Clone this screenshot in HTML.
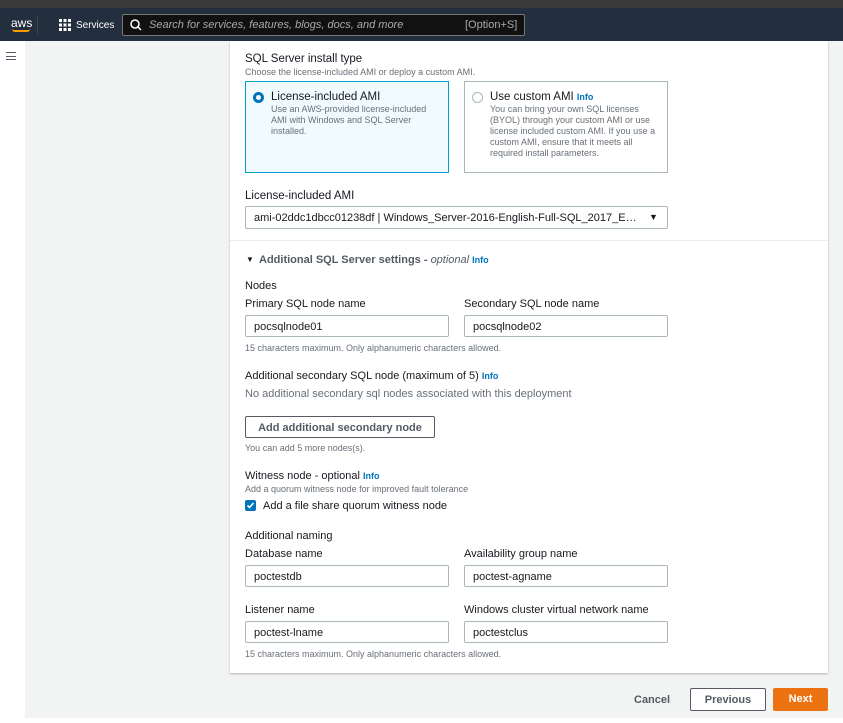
<!DOCTYPE html>
<html><head><meta charset="utf-8"><style>
*{box-sizing:border-box;margin:0;padding:0}
body{width:843px;height:723px;overflow:hidden;background:#f2f3f3;font-family:"Liberation Sans",Arial,sans-serif;color:#16191f;position:relative}
.a{position:absolute;white-space:nowrap}
.lbl{font-size:11px;color:#16191f}
.desc{font-size:9px;color:#687078}
.in{position:absolute;height:22px;border:1px solid #aab7b8;background:#fff;font-size:11px;padding:5px 8px;border-radius:2px;overflow:hidden;white-space:nowrap}
.info{color:#0073bb;font-weight:bold;font-size:9px}
</style></head><body>
<div class="a" style="left:0;top:0;width:843px;height:8px;background:#3a3a3a"></div>
<div class="a" style="left:0;top:8px;width:843px;height:33px;background:#232f3e"></div>
<div class="a" style="left:11px;top:16px;color:#fff;font-size:12px">aws</div>
<div class="a" style="left:12px;top:29px;width:18px;height:3px;border-bottom:2px solid #ff9900;border-radius:0 0 10px 10px"></div>
<div class="a" style="left:37px;top:16px;width:1px;height:18px;background:#444"></div>
<svg class="a" style="left:59px;top:19px" width="12" height="12"><g fill="#fff"><rect x="0" y="0" width="3" height="3"/><rect x="4.5" y="0" width="3" height="3"/><rect x="9" y="0" width="3" height="3"/><rect x="0" y="4.5" width="3" height="3"/><rect x="4.5" y="4.5" width="3" height="3"/><rect x="9" y="4.5" width="3" height="3"/><rect x="0" y="9" width="3" height="3"/><rect x="4.5" y="9" width="3" height="3"/><rect x="9" y="9" width="3" height="3"/></g></svg>
<div class="a" style="left:76px;top:20px;color:#fff;font-size:10px">Services</div>
<div class="a" style="left:122px;top:14px;width:403px;height:22px;background:#111;border:1px solid #777;border-radius:2px"></div>
<svg class="a" style="left:130px;top:19px" width="12" height="12"><circle cx="5" cy="5" r="4" stroke="#fff" stroke-width="1.5" fill="none"/><path d="M8 8l3 3" stroke="#fff" stroke-width="1.5"/></svg>
<div class="a" style="left:149px;top:19px;color:#aaa;font-size:11px;font-style:italic">Search for services, features, blogs, docs, and more</div>
<div class="a" style="left:465px;top:19px;color:#aaa;font-size:11px">[Option+S]</div>
<div class="a" style="left:0;top:41px;width:25px;height:682px;background:#fff"></div>
<div class="a" style="left:6px;top:52px;width:10px;height:8px;border-top:1.5px solid #545b64;border-bottom:1.5px solid #545b64"></div>
<div class="a" style="left:6px;top:55.5px;width:10px;height:1.5px;background:#545b64"></div>
<div class="a" style="left:230px;top:41px;width:598px;height:632px;background:#fff;box-shadow:0 1px 2px rgba(0,0,0,.25)"></div>
<div class="a" style="left:230px;top:240px;width:598px;height:1px;background:#eaeded"></div>

<div class="a lbl" style="left:245px;top:53px;font-size:11.5px">SQL Server install type</div>
<div class="a desc" style="left:245px;top:67px">Choose the license-included AMI or deploy a custom AMI.</div>
<div class="a" style="left:245px;top:81px;width:204px;height:92px;background:#f1faff;border:1px solid #00a1c9"></div>
<div class="a" style="left:253px;top:92px;width:11px;height:11px;border-radius:50%;border:3.5px solid #0073bb;background:#fff"></div>
<div class="a" style="left:271px;top:91px;font-size:11.5px">License-included AMI</div>
<div class="a desc" style="left:271px;top:104px;line-height:11px;white-space:normal;width:165px">Use an AWS-provided license-included AMI with Windows and SQL Server installed.</div>
<div class="a" style="left:464px;top:81px;width:204px;height:92px;border:1px solid #aab7b8"></div>
<div class="a" style="left:472px;top:92px;width:11px;height:11px;border-radius:50%;border:1px solid #aab7b8"></div>
<div class="a" style="left:490px;top:91px;font-size:11.5px">Use custom AMI <span class="info">Info</span></div>
<div class="a desc" style="left:490px;top:104px;line-height:11px;white-space:normal;width:170px">You can bring your own SQL licenses (BYOL) through your custom AMI or use license included custom AMI. If you use a custom AMI, ensure that it meets all required install parameters.</div>
<div class="a lbl" style="left:245px;top:190px;font-size:11.5px">License-included AMI</div>
<div class="in" style="left:245px;top:206px;width:423px;height:23px;padding-right:26px;text-overflow:ellipsis">ami-02ddc1dbcc01238df | Windows_Server-2016-English-Full-SQL_2017_Enterprise</div>
<div class="a" style="left:649px;top:212px;font-size:9px">▼</div>

<div class="a" style="left:246px;top:255px;font-size:8px">▼</div>
<div class="a" style="left:259px;top:254px;font-size:11px;font-weight:bold;color:#545b64">Additional SQL Server settings - <i style="font-weight:normal">optional</i> <span class="info">Info</span></div>
<div class="a lbl" style="left:245px;top:280px">Nodes</div>
<div class="a lbl" style="left:245px;top:298px">Primary SQL node name</div>
<div class="a lbl" style="left:464px;top:298px">Secondary SQL node name</div>
<div class="in" style="left:245px;top:315px;width:204px">pocsqlnode01</div>
<div class="in" style="left:464px;top:315px;width:204px">pocsqlnode02</div>
<div class="a desc" style="left:245px;top:343px">15 characters maximum. Only alphanumeric characters allowed.</div>
<div class="a lbl" style="left:245px;top:370px">Additional secondary SQL node (maximum of 5) <span class="info">Info</span></div>
<div class="a" style="left:245px;top:388px;font-size:11px;color:#687078">No additional secondary sql nodes associated with this deployment</div>
<div class="a" style="left:245px;top:416px;width:190px;height:22px;border:1px solid #545b64;font-size:11px;font-weight:bold;color:#545b64;text-align:center;line-height:22px;border-radius:2px">Add additional secondary node</div>
<div class="a desc" style="left:245px;top:443px">You can add 5 more nodes(s).</div>
<div class="a lbl" style="left:245px;top:470px">Witness node - optional <span class="info">Info</span></div>
<div class="a desc" style="left:245px;top:484px">Add a quorum witness node for improved fault tolerance</div>
<div class="a" style="left:245px;top:500px;width:11px;height:11px;background:#0073bb;border-radius:2px"></div>
<svg class="a" style="left:245px;top:500px" width="11" height="11"><path d="M2.5 5.5l2 2 4-4.5" stroke="#fff" stroke-width="1.6" fill="none"/></svg>
<div class="a lbl" style="left:263px;top:500px">Add a file share quorum witness node</div>
<div class="a lbl" style="left:245px;top:530px">Additional naming</div>
<div class="a lbl" style="left:245px;top:548px">Database name</div>
<div class="a lbl" style="left:464px;top:548px">Availability group name</div>
<div class="in" style="left:245px;top:565px;width:204px">poctestdb</div>
<div class="in" style="left:464px;top:565px;width:204px">poctest-agname</div>
<div class="a lbl" style="left:245px;top:604px">Listener name</div>
<div class="a lbl" style="left:464px;top:604px">Windows cluster virtual network name</div>
<div class="in" style="left:245px;top:621px;width:204px">poctest-lname</div>
<div class="in" style="left:464px;top:621px;width:204px">poctestclus</div>
<div class="a desc" style="left:245px;top:649px">15 characters maximum. Only alphanumeric characters allowed.</div>

<div class="a" style="left:634px;top:694px;font-size:11px;font-weight:bold;color:#545b64">Cancel</div>
<div class="a" style="left:690px;top:688px;width:76px;height:23px;border:1px solid #545b64;background:#fff;font-size:11px;font-weight:bold;color:#545b64;text-align:center;line-height:22px;border-radius:2px">Previous</div>
<div class="a" style="left:773px;top:688px;width:55px;height:23px;background:#ec7211;font-size:11px;font-weight:bold;color:#fff;text-align:center;line-height:23px;border-radius:2px">Next</div>
<div class="a" style="left:25px;top:718px;width:818px;height:5px;background:#fff"></div>
</body></html>
